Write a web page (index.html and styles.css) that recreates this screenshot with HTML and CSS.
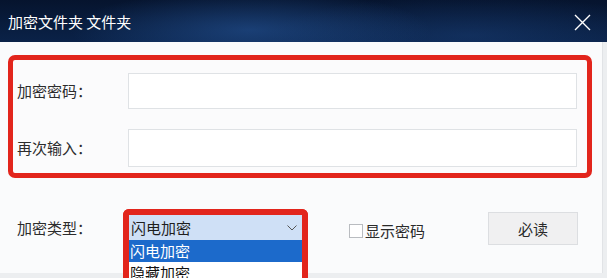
FILE: index.html
```html
<!DOCTYPE html>
<html lang="zh-CN">
<head>
<meta charset="utf-8">
<title>加密文件夹</title>
<link rel="stylesheet" href="styles.css">
</head>
<body>
<div class="window">
  <div class="titlebar">
    <span class="title">加密文件夹 文件夹</span>
    <svg class="close" width="17" height="17" viewBox="0 0 17 17"><path d="M1 1 L16 16 M16 1 L1 16" stroke="#ffffff" stroke-width="1.4" fill="none"/></svg>
  </div>
  <div class="panel">
    <div class="pwbox">
      <div class="row">
        <label class="lbl">加密密码：</label>
        <div class="input"></div>
      </div>
      <div class="row">
        <label class="lbl">再次输入：</label>
        <div class="input tall"></div>
      </div>
    </div>
    <div class="bottom">
      <label class="lbl type-lbl">加密类型：</label>
      <div class="ddbox">
        <div class="select">
          <span>闪电加密</span>
          <svg width="10" height="6" viewBox="0 0 10 6"><path d="M0.5 0.5 L5 5 L9.5 0.5" stroke="#555" stroke-width="1" fill="none"/></svg>
        </div>
        <div class="opt active">闪电加密</div>
        <div class="opt">隐藏加密</div>
      </div>
      <div class="check">
        <span class="box"></span>
        <span>显示密码</span>
      </div>
      <div class="btn">必读</div>
    </div>
  </div>
</div>
</body>
</html>
```
FILE: styles.css
```css
*, *::before, *::after {
  box-sizing: border-box;
}
html, body {
  margin: 0;
  padding: 0;
}
body {
  width: 607px;
  height: 278px;
  overflow: hidden;
  background: #eceef0;
  font-family: "Noto Sans CJK SC", "Noto Sans", sans-serif;
  color: #2a2a2a;
}
.window {
  display: flex;
  flex-direction: column;
  height: 278px;
}
.titlebar {
  height: 42px;
  flex: none;
  display: flex;
  align-items: center;
  justify-content: space-between;
  padding: 0 16px 0 8px;
  background:
    radial-gradient(ellipse 180px 40px at 250px 30px, rgba(40,90,160,0.55), rgba(40,90,160,0) 100%),
    radial-gradient(ellipse 200px 40px at 470px 35px, rgba(30,70,130,0.4), rgba(30,70,130,0) 100%),
    linear-gradient(180deg, #06142e 0%, #0a2248 100%);
}
.title {
  color: #ffffff;
  font-size: 15px;
  line-height: 20px;
  margin-top: 2px;
}
.close {
  display: block;
  margin-top: 2px;
}
.panel {
  width: 603px;
  height: 231px;
  flex: none;
  background: #fafbfc;
  border-right: 1px solid #e1e3e6;
  display: flex;
  flex-direction: column;
}
.pwbox {
  margin: 13px 0 0 8px;
  width: 584px;
  height: 123px;
  flex: none;
  border: 5px solid #e2251c;
  border-radius: 7px;
  padding: 13px 10px 0 4px;
  display: flex;
  flex-direction: column;
  gap: 20px;
  background: #fbfbfc;
}
.row {
  display: flex;
  align-items: center;
}
.lbl {
  font-size: 15px;
  line-height: 20px;
  color: #2c2c2c;
}
.row .lbl {
  width: 111px;
  flex: none;
}
.input {
  flex: 1;
  height: 36px;
  border: 1px solid #dfe2e5;
  background: #ffffff;
}
.input.tall {
  height: 38px;
}
.bottom {
  display: flex;
  align-items: flex-start;
  margin-top: 31px;
  padding-left: 17px;
}
.type-lbl {
  width: 106px;
  flex: none;
  margin-top: 9px;
}
.ddbox {
  width: 185px;
  height: 80px;
  border: 6px solid #e2251c;
  border-bottom: none;
  border-radius: 6px 6px 0 0;
  background: #ffffff;
  flex: none;
}
.select {
  height: 25px;
  background: #cfe0f6;
  display: flex;
  align-items: center;
  justify-content: space-between;
  padding: 0 5px 0 2px;
  font-size: 15px;
  color: #1e1e1e;
}
.opt {
  height: 22px;
  line-height: 22px;
  font-size: 15px;
  padding-left: 1px;
  color: #111;
}
.opt.active {
  background: #1c6acb;
  color: #ffffff;
}
.check {
  display: flex;
  align-items: center;
  gap: 2px;
  margin: 12px 0 0 41px;
  font-size: 15px;
  line-height: 20px;
  color: #2a2a2a;
}
.box {
  width: 14px;
  height: 14px;
  border: 1px solid #b9bcc0;
  background: #ffffff;
}
.btn {
  margin: 3px 0 0 63px;
  width: 90px;
  height: 33px;
  border: 1px solid #dcdee1;
  background: #f0f0f1;
  display: flex;
  align-items: center;
  justify-content: center;
  font-size: 15px;
  color: #2a2a2a;
}
```
